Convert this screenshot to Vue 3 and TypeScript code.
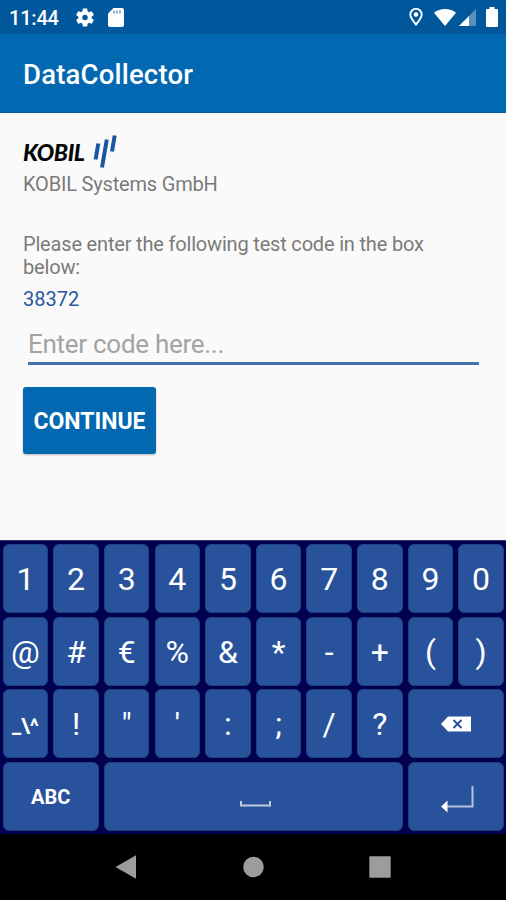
<script setup lang="ts">
import { ref } from 'vue'

interface Key {
  id: string
  label?: string
  kind?: 'small' | 'abc' | 'backspace' | 'space' | 'enter'
}

const testCode = '38372'
const code = ref('')

const keys: Key[] = [
  ...'1234567890@#€%&*-+()'.split('').map((c) => ({ id: c, label: c })),
  { id: 'more', label: '_\\^', kind: 'small' },
  ...'!"\':;/?'.split('').map((c) => ({ id: c, label: c })),
  { id: 'backspace', kind: 'backspace' },
  { id: 'abc', label: 'ABC', kind: 'abc' },
  { id: 'space', kind: 'space' },
  { id: 'enter', kind: 'enter' },
]

function press(key: Key) {
  if (key.kind === 'backspace') code.value = code.value.slice(0, -1)
  else if (key.kind === 'space') code.value += ' '
  else if (!key.kind && key.label) code.value += key.label
}
</script>

<template>
  <div class="screen">
    <div class="status">
      <span class="clock">11:44</span>
      <svg class="gear" viewBox="2 2 20 20"><path fill="#fff" d="M19.43 12.98c.04-.32.07-.64.07-.98s-.03-.66-.07-.98l2.11-1.65c.19-.15.24-.42.12-.64l-2-3.46c-.12-.22-.39-.3-.61-.22l-2.49 1c-.52-.4-1.08-.73-1.69-.98l-.38-2.65C14.46 2.18 14.25 2 14 2h-4c-.25 0-.46.18-.49.42l-.38 2.65c-.61.25-1.17.59-1.69.98l-2.49-1c-.23-.09-.49 0-.61.22l-2 3.46c-.13.22-.07.49.12.64l2.11 1.65c-.04.32-.07.65-.07.98s.03.66.07.98l-2.11 1.65c-.19.15-.24.42-.12.64l2 3.46c.12.22.39.3.61.22l2.49-1c.52.4 1.08.73 1.69.98l.38 2.65c.03.24.24.42.49.42h4c.25 0 .46-.18.49-.42l.38-2.65c.61-.25 1.17-.59 1.69-.98l2.49 1c.23.09.49 0 .61-.22l2-3.46c.12-.22.07-.49-.12-.64l-2.11-1.65zM12 15A3 3 0 1 1 12 9a3 3 0 0 1 0 6z"/></svg>
      <svg class="sd" viewBox="0 0 16 19"><path fill="#fff" d="M5.500 0H14a2 2 0 0 1 2 2v15a2 2 0 0 1-2 2H2a2 2 0 0 1-2-2V5.500z"/><path stroke="#01579b" stroke-opacity=".6" stroke-width="1.500" d="M6 2.500v3M9 2.500v3M12 2.500v3"/></svg>
      <div class="spacer"></div>
      <svg class="pin" viewBox="0 0 14 18"><path fill="none" stroke="#fff" stroke-width="1.900" d="M7 16.500C4 12.800 1.300 9.600 1.300 6.500a5.700 5.700 0 0 1 11.400 0C12.700 9.600 10 12.800 7 16.500z"/><circle cx="7" cy="6.500" r="2.300" fill="#fff"/></svg>
      <svg class="wifi" viewBox="0 0 22 17"><path fill="#fff" d="M0 3.800C6-1.200 16-1.200 22 3.800L11 17z"/></svg>
      <svg class="signal" viewBox="0 0 17 17"><path fill="#fff" fill-opacity=".35" d="M17 0v17H0z"/><path fill="#fff" d="M10 7v10H0z"/></svg>
      <svg class="battery" viewBox="0 0 12 20"><path fill="#fff" d="M3.500 0h5v2H11a1 1 0 0 1 1 1v16a1 1 0 0 1-1 1H1a1 1 0 0 1-1-1V3a1 1 0 0 1 1-1h2.500z"/></svg>
    </div>
    <header class="appbar"><h1>DataCollector</h1></header>
    <main class="content">
      <div class="logo">
        <span>KOBIL</span>
        <svg viewBox="0 0 24 34"><g fill="none" stroke="#1b56a3" stroke-width="4"><path d="M5.300 8.500L2.600 24.500M13.800 4.500L9 32.500M21.700 .5L19 16.500"/></g></svg>
      </div>
      <p class="company">KOBIL Systems GmbH</p>
      <p class="prompt">Please enter the following test code in the box below:</p>
      <p class="code">{{ testCode }}</p>
      <input v-model="code" class="field" placeholder="Enter code here..." />
      <button class="continue">CONTINUE</button>
    </main>
    <section class="keyboard">
      <button v-for="key in keys" :key="key.id" class="key" :class="key.kind" @click="press(key)">
        <svg v-if="key.kind === 'backspace'" width="30" height="16" viewBox="0 0 30 16"><path fill="#fff" d="M0 8L7 .5h23v15H7z"/><path stroke="#28529c" stroke-width="2" d="M12.500 4l8 8M20.500 4l-8 8"/></svg>
        <svg v-else-if="key.kind === 'space'" width="31" height="6" viewBox="0 0 31 6"><path fill="none" stroke="#bdcbe2" stroke-width="2" d="M1 0v4.500h29V0"/></svg>
        <svg v-else-if="key.kind === 'enter'" width="33" height="27" viewBox="0 0 33 27"><path fill="none" stroke="#b4c4de" stroke-width="2" d="M31.500 0v20.500H6"/><path fill="#fff" d="M0 20.500L6.500 14.500v12z"/></svg>
        <span v-else>{{ key.label }}</span>
      </button>
    </section>
    <nav class="navbar">
      <svg viewBox="0 0 24 24"><path fill="#9c9c9c" d="M1.500 12L22 .3v23.400z"/></svg>
      <svg viewBox="0 0 24 24"><circle cx="12.500" cy="12" r="10.300" fill="#9c9c9c"/></svg>
      <svg viewBox="0 0 24 24"><rect x="1.300" y="1.300" width="21.400" height="21.400" rx="1" fill="#9c9c9c"/></svg>
    </nav>
  </div>
</template>

<style>
body { margin: 0; background: #fafafa; }
</style>

<style scoped>
.screen { width: 506px; height: 900px; display: flex; flex-direction: column; overflow: hidden; background: #fafafa; font-family: Roboto, "Liberation Sans", sans-serif; }
.status { height: 34px; box-sizing: border-box; flex: none; display: flex; align-items: center; background: #01579b; padding: 0 8px 0 9px; color: #fff; }
.clock { font-size: 20px; font-weight: 500; letter-spacing: -.2px; line-height: 34px; width: 67px; padding-top: 2px; }
.gear { width: 18px; height: 19px; margin-right: 14px; }
.sd { width: 16px; height: 19px; }
.spacer { flex: 1; }
.pin { width: 14px; height: 18px; margin-right: 11px; }
.wifi { width: 22px; height: 17px; margin-right: 3px; }
.signal { width: 17px; height: 17px; margin-right: 10px; }
.battery { width: 12px; height: 20px; }
.appbar { height: 79px; box-sizing: border-box; flex: none; display: flex; align-items: center; padding: 4px 23px 0; background: #0268b1; border-bottom: 1px solid #1256a0; }
h1 { margin: 0; color: #fff; font-size: 27.500px; font-weight: 500; letter-spacing: .2px; line-height: 32px; }
.content { flex: none; height: 427px; box-sizing: border-box; padding: 22px 27px 0 23px; display: flex; flex-direction: column; align-items: flex-start; color: #7a7a7a; }
p { margin: 0; font-size: 20px; line-height: 23px; letter-spacing: -.18px; }
.logo { display: flex; height: 34px; align-items: center; }
.logo span { font-family: Lato, sans-serif; font-weight: 900; font-style: italic; font-size: 23px; letter-spacing: -.4px; line-height: 34px; color: #060606; width: 70px; }
.logo svg { width: 24px; height: 34px; }
.company { margin-top: 4px; }
.prompt { margin-top: 37px; }
.code { margin-top: 9px; color: #28589f; letter-spacing: 0; }
.field { margin: 11px 0 0 5px; width: 451px; height: 43px; box-sizing: border-box; padding: 3px 0 0; border: 0; border-bottom: 3px solid #4171b1; background: none; outline: 0; color: #333; font: 26px Roboto, sans-serif; letter-spacing: -.28px; }
.field::placeholder { color: #a3a3a3; opacity: 1; }
.continue { margin-top: 22px; width: 133px; height: 67px; padding: 2px 0 0; border: 0; border-radius: 3px; background: #0268b1; color: #fff; font: 700 23px Roboto, sans-serif; box-shadow: 0 1px 2px #0004; }
.keyboard { flex: none; height: 294px; box-sizing: border-box; display: grid; grid-template-columns: repeat(10, 1fr); grid-template-rows: repeat(4, 1fr); gap: 3.5px 5.200px; padding: 3px 2.200px 3px 2.700px; background: #00004f; border-top: 1px solid #38386a; }
.key { min-width: 0; padding: 1px 0 0; border: 1px solid #1d4282; border-radius: 6px; background: #28529c; color: #fff; display: flex; align-items: center; justify-content: center; font: 32px Roboto, sans-serif; }
.small { font-size: 20.500px; font-weight: 700; padding-top: 4px; }
.abc { font-size: 20px; font-weight: 700; grid-column: span 2; }
.backspace, .enter { grid-column: span 2; }
.backspace { padding: 0; }
.space { grid-column: span 6; padding: 16px 0 0 5px; }
.enter { padding: 7px 0 0 3px; }
.navbar { flex: 1; background: #000; display: flex; justify-content: space-between; padding: 21px 114px 0; }
.navbar svg { width: 24px; height: 24px; }
</style>
